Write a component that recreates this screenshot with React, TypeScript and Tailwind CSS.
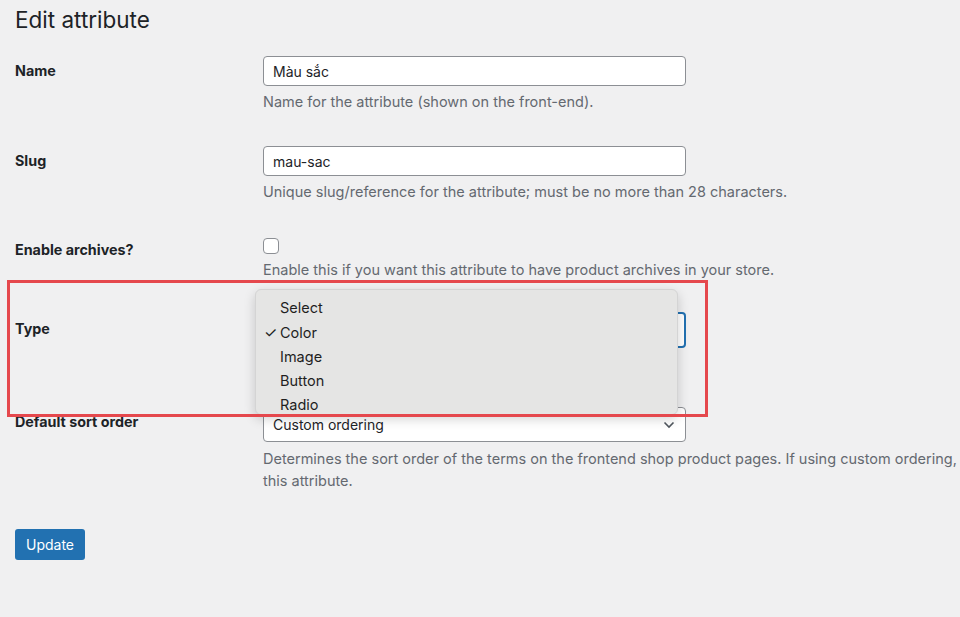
import React from 'react';

const options = ['Select', 'Color', 'Image', 'Button', 'Radio'];

const labelCls = 'w-[248px] shrink-0 text-[14.3px] font-bold';
const inputCls =
    'w-[423px] h-[30px] flex items-center px-[9px] bg-white border border-[#8c8f94] rounded-[4px] text-[14px]';
const descCls = 'mt-[6px] text-[14.5px] leading-[20px] text-[#646970] whitespace-nowrap';

export default function App() {
    return (
        <div className="relative w-[960px] h-[617px] overflow-hidden bg-[#f0f0f1] text-[#1d2327] font-['Inter','Liberation_Sans',Arial,sans-serif]">
            <h1 className="pl-[15px] pt-[5px] text-[22.5px] leading-[29px] font-normal">Edit attribute</h1>

            {/* Name */}
            <div className="flex pl-[15px] mt-[22px]">
                <div className={`${labelCls} h-[30px] flex items-center`}>Name</div>
                <div>
                    <div className={inputCls}>Màu sắc</div>
                    <p className={descCls}>Name for the attribute (shown on the front-end).</p>
                </div>
            </div>

            {/* Slug */}
            <div className="flex pl-[15px] mt-[34px]">
                <div className={`${labelCls} h-[30px] flex items-center`}>Slug</div>
                <div>
                    <div className={inputCls}>mau-sac</div>
                    <p className={descCls}>
                        Unique slug/reference for the attribute; must be no more than 28 characters.
                    </p>
                </div>
            </div>

            {/* Enable archives */}
            <div className="flex pl-[15px] mt-[36px]">
                <div className={`${labelCls} pt-[2px] leading-[20px]`}>Enable archives?</div>
                <div>
                    <div className="w-[16px] h-[16px] bg-white border border-[#8c8f94] rounded-[4px]" />
                    <p className={descCls}>
                        Enable this if you want this attribute to have product archives in your store.
                    </p>
                </div>
            </div>

            {/* Type */}
            <div className="flex pl-[15px] mt-[32px]">
                <div className={`${labelCls} h-[34px] flex items-center`}>Type</div>
                <div className="w-[423px] h-[36px] flex items-center px-[9px] bg-white border-2 border-[#2271b1] rounded-[4px] text-[14px]">
                    Color
                </div>
            </div>

            {/* Default sort order */}
            <div className="flex pl-[15px] mt-[59px]">
                <div className={`${labelCls} h-[30px] flex items-center`}>Default sort order</div>
                <div>
                    <div className="w-[423px] h-[35px] flex items-center justify-between pl-[9px] pr-[10px] bg-white border border-[#8c8f94] rounded-[4px] text-[14px]">
                        Custom ordering
                        <svg width="12" height="8" viewBox="0 0 12 8" fill="none">
                            <path d="M1.5 1.5L6 6L10.5 1.5" stroke="#50575e" strokeWidth="1.6" />
                        </svg>
                    </div>
                    <p className="mt-[6px] text-[14.5px] leading-[22px] text-[#646970] whitespace-nowrap">
                        Determines the sort order of the terms on the frontend shop product pages. If using custom ordering, you can drag and drop the terms in
                    </p>
                    <p className="text-[14.5px] leading-[22px] text-[#646970]">this attribute.</p>
                </div>
            </div>

            <div className="pl-[15px] mt-[37px]">
                <button className="w-[70px] h-[31px] bg-[#2271b1] text-white text-[14px] rounded-[3px]">Update</button>
            </div>

            {/* Open select menu */}
            <div className="absolute left-[255px] top-[289px] w-[423px] h-[126px] pt-[6px] bg-[#e5e5e4] border border-[#d4d4d4] rounded-[6px] shadow-[0_4px_12px_rgba(0,0,0,0.18)] text-[14.5px] text-[#1f1f1f]">
                {options.map(o => (
                    <div key={o} className="flex items-center h-[24.3px]">
                        <span className="w-[24px] shrink-0 pl-[8px] text-[15px] leading-none">{o === 'Color' ? '✓' : ''}</span>
                        {o}
                    </div>
                ))}
            </div>

            {/* Annotation */}
            <div className="absolute left-[7px] top-[280px] w-[701px] h-[137px] border-[3px] border-[#e5484d]" />
        </div>
    );
}
